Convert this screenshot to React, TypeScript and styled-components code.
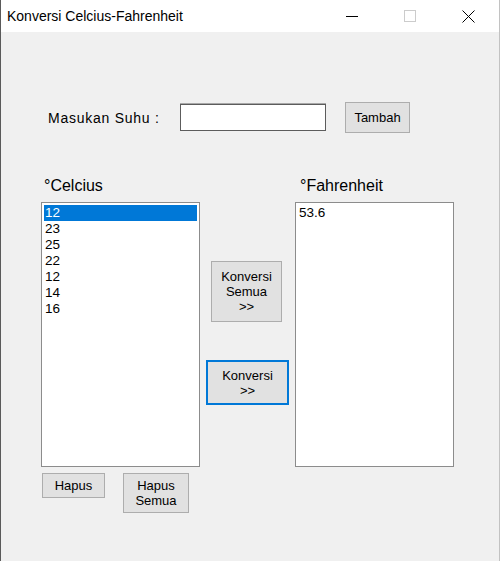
import React from "react";
import styled, { createGlobalStyle } from "styled-components";

const Global = createGlobalStyle`
  html, body { margin: 0; padding: 0; background: #ffffff; }
  body { font-family: "Liberation Sans", Arial, sans-serif; color: #000; }
  * { box-sizing: border-box; }
`;

const Window = styled.div`
  width: 500px;
  height: 561px;
  border-left: 1px solid #5a5a5a;
  border-right: 1px solid #c2c2c2;
  display: flex;
  flex-direction: column;
  background: #f0f0f0;
`;

const TitleBar = styled.div`
  height: 32px;
  flex: none;
  background: #ffffff;
  display: flex;
  align-items: center;
  padding-right: 2px;
`;

const Title = styled.div`
  flex: 1;
  padding-left: 6px;
  font-size: 14px;
  color: #000;
`;

const Caption = styled.div`
  width: 58px;
  height: 32px;
  display: flex;
  align-items: center;
  justify-content: center;
`;

const Body = styled.div`
  flex: 1;
  padding: 70px 0 0 40px;
  display: flex;
  flex-direction: column;
`;

const TopRow = styled.div`
  display: flex;
  align-items: center;
  height: 31px;
`;

const FieldLabel = styled.div`
  width: 139px;
  padding-left: 7px;
  padding-top: 1px;
  font-size: 14px;
  letter-spacing: 0.75px;
`;

const TextBox = styled.div`
  width: 146px;
  height: 27px;
  background: #fff;
  border: 1px solid #5c5c5c;
  box-shadow: 0 -1px 0 #a8a8a8;
`;

const Button = styled.div<{ $w: number; $h: number; $focused?: boolean }>`
  width: ${(p) => p.$w}px;
  height: ${(p) => p.$h}px;
  flex: none;
  background: #e1e1e1;
  border: ${(p) => (p.$focused ? "2px solid #0078d7" : "1px solid #adadad")};
  display: flex;
  align-items: center;
  justify-content: center;
  text-align: center;
  font-size: 13px;
  line-height: 15px;
  color: #000;
`;

const Main = styled.div`
  display: flex;
  align-items: flex-start;
  margin-top: 43px;
`;

const Column = styled.div`
  width: 159px;
  display: flex;
  flex-direction: column;
`;

const MiddleColumn = styled.div`
  width: 83px;
  margin: 0 6px;
  padding-top: 26px;
  display: flex;
  flex-direction: column;
  align-items: flex-start;
`;

const GroupLabel = styled.div<{ $indent: number }>`
  height: 20px;
  line-height: 20px;
  padding-left: ${(p) => p.$indent}px;
  font-size: 16px;
`;

const ListBox = styled.div`
  margin-top: 6px;
  height: 265px;
  background: #ffffff;
  border: 1px solid #8c8c8c;
  padding: 2px;
`;

const Item = styled.div<{ $selected?: boolean }>`
  height: 16px;
  line-height: 16px;
  padding-left: 1px;
  font-size: 13.5px;
  background: ${(p) => (p.$selected ? "#0078d7" : "transparent")};
  color: ${(p) => (p.$selected ? "#ffffff" : "#000000")};
`;

const BottomRow = styled.div`
  display: flex;
  align-items: flex-start;
  margin-top: 6px;
  padding-left: 1px;
  gap: 18px;
`;

const Spacer = styled.div<{ $h: number; $x?: number }>`
  height: ${(p) => p.$h}px;
  width: ${(p) => p.$x ?? 0}px;
  flex: none;
`;

const ShiftRow = styled.div<{ $left: number }>`
  padding-left: ${(p) => p.$left}px;
`;

const celcius = ["12", "23", "25", "22", "12", "14", "16"];

export default function App() {
  return (
    <>
      <Global />
      <Window>
        <TitleBar>
          <Title>Konversi Celcius-Fahrenheit</Title>
          <Caption>
            <svg width="12" height="12" viewBox="0 0 12 12">
              <line x1="0" y1="6.5" x2="12" y2="6.5" stroke="#000" strokeWidth="1" />
            </svg>
          </Caption>
          <Caption>
            <svg width="12" height="12" viewBox="0 0 12 12">
              <rect x="0.5" y="0.5" width="11" height="11" fill="none" stroke="#cccccc" strokeWidth="1" />
            </svg>
          </Caption>
          <Caption>
            <svg width="13" height="13" viewBox="0 0 13 13">
              <path d="M0.5 0.5 L12.5 12.5 M12.5 0.5 L0.5 12.5" stroke="#000" strokeWidth="1" />
            </svg>
          </Caption>
        </TitleBar>
        <Body>
          <TopRow>
            <FieldLabel>Masukan Suhu :</FieldLabel>
            <TextBox />
            <Spacer $h={1} $x={19} />
            <Button $w={65} $h={31}>Tambah</Button>
          </TopRow>
          <Main>
            <Column>
              <GroupLabel $indent={3}>°Celcius</GroupLabel>
              <ListBox>
                {celcius.map((v, i) => (
                  <Item key={i} $selected={i === 0}>
                    {v}
                  </Item>
                ))}
              </ListBox>
              <BottomRow>
                <Button $w={63} $h={25}>Hapus</Button>
                <Button $w={66} $h={40}>
                  Hapus
                  <br />
                  Semua
                </Button>
              </BottomRow>
            </Column>
            <MiddleColumn>
              <Spacer $h={59} />
              <ShiftRow $left={5}>
                <Button $w={71} $h={61}>
                  Konversi
                  <br />
                  Semua
                  <br />
                  &gt;&gt;
                </Button>
              </ShiftRow>
              <Spacer $h={38} />
              <Button $w={83} $h={45} $focused>
                Konversi
                <br />
                &gt;&gt;
              </Button>
            </MiddleColumn>
            <Column>
              <GroupLabel $indent={5}>°Fahrenheit</GroupLabel>
              <ListBox>
                <Item>53.6</Item>
              </ListBox>
            </Column>
          </Main>
        </Body>
      </Window>
    </>
  );
}
